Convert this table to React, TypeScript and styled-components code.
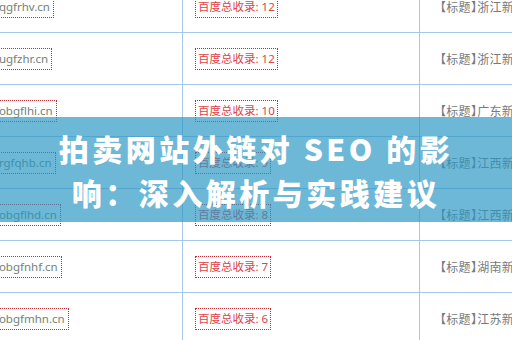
import React from 'react'
import styled, { createGlobalStyle } from 'styled-components'

const GlobalStyle = createGlobalStyle`
  html, body {
    margin: 0;
    padding: 0;
    background: #ffffff;
    overflow: hidden;
  }
`

const Page = styled.div`
  position: relative;
  width: 512px;
  height: 340px;
  overflow: hidden;
  font-family: 'Noto Sans', 'Noto Sans CJK SC', sans-serif;
`

// the list is wider than the view, its left part is scrolled away
const Table = styled.div`
  margin-top: -19px;
  margin-left: -60px;
  width: 700px;
`

const Row = styled.div`
  display: grid;
  grid-template-columns: 242px 237px 1fr;
  height: 52px;
  box-sizing: border-box;
  border-bottom: 1px solid #a6c8e8;
`

const Cell = styled.div<{ $pad: number; $divider?: boolean }>`
  display: flex;
  align-items: center;
  padding-left: ${(p) => p.$pad}px;
  border-left: ${(p) => (p.$divider ? '1px solid #a6c8e8' : 'none')};
  white-space: nowrap;
  overflow: hidden;
`

const Domain = styled.span`
  display: inline-block;
  border: 1px dotted #c22a33;
  padding: 1px 3px;
  font-size: 11.5px;
  line-height: 18px;
  color: #728275;
`

const Count = styled.span`
  display: inline-block;
  border: 1px dotted #c22a33;
  padding: 1px 2px;
  font-size: 11.5px;
  line-height: 18px;
  color: #e0414a;
`

const Headline = styled.span`
  font-family: 'Noto Sans CJK SC', sans-serif;
  font-size: 12px;
  color: #7a7a7a;
  font-feature-settings: 'halt';
  letter-spacing: 0.3px;
`

const Banner = styled.div`
  position: absolute;
  left: 0;
  right: 0;
  top: 117px;
  height: 105px;
  background: rgba(40, 150, 195, 0.68);
  display: flex;
  flex-direction: column;
  align-items: center;
  justify-content: center;
`

const Title = styled.div`
  color: #ffffff;
  font-family: 'Noto Sans CJK SC', 'Noto Sans', sans-serif;
  font-weight: 900;
  font-size: 30px;
  line-height: 44px;
  letter-spacing: 3.5px;
  text-align: center;
  white-space: nowrap;
`

type Site = { domain: string; count: number; region: string }

const sites: Site[] = [
  { domain: 'www.kqgfrhv.cn', count: 12, region: '浙江新闻网' },
  { domain: 'www.kugfzhr.cn', count: 12, region: '浙江新闻网' },
  { domain: 'www.kobgflhi.cn', count: 10, region: '广东新闻网' },
  { domain: 'www.krgfqhb.cn', count: 9, region: '江西新闻网' },
  { domain: 'www.kobgflhd.cn', count: 8, region: '江西新闻网' },
  { domain: 'www.kobgfnhf.cn', count: 7, region: '湖南新闻网' },
  { domain: 'www.kobgfmhn.cn', count: 6, region: '江苏新闻网' },
]

const App = () => (
  <Page>
    <GlobalStyle />
    <Table>
      {sites.map((site) => (
        <Row key={site.domain}>
          <Cell $pad={19}>
            <Domain>{site.domain}</Domain>
          </Cell>
          <Cell $pad={12} $divider>
            <Count>百度总收录: {site.count}</Count>
          </Cell>
          <Cell $pad={20} $divider>
            <Headline>【标题】{site.region}</Headline>
          </Cell>
        </Row>
      ))}
    </Table>
    <Banner>
      <Title>拍卖网站外链对 SEO 的影</Title>
      <Title>响：深入解析与实践建议</Title>
    </Banner>
  </Page>
)

export default App
